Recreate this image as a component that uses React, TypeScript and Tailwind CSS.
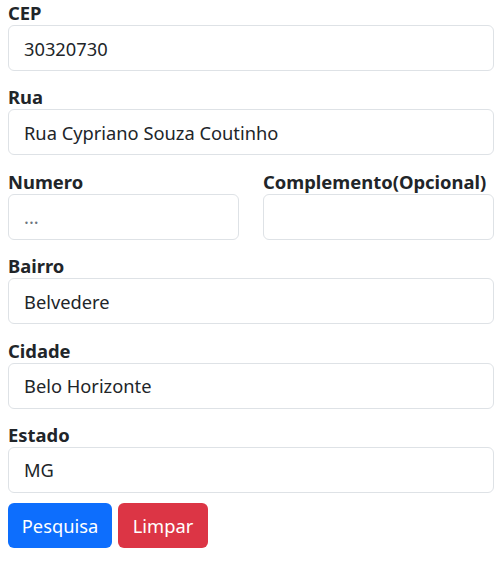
import React from "react";

function Field({ label, value, placeholder }: { label: string; value?: string; placeholder?: string }) {
  return (
    <div className="flex flex-col">
      <label className="h-[25px] leading-[25px] font-bold text-[18.4px] text-[#212529] whitespace-nowrap">{label}</label>
      <input
        readOnly
        value={value ?? ""}
        placeholder={placeholder}
        className="h-[46px] w-full rounded-[6px] border border-[#dee2e6] bg-white px-[15px] text-[18.3px] text-[#212529] placeholder:text-[#6c757d] outline-none"
      />
    </div>
  );
}

export default function App() {
  return (
    <div className="bg-white w-[500px] h-[561px] pl-[8px] pr-[6px] font-['Noto_Sans',sans-serif]">
      <div className="flex flex-col gap-[13.4px]">
        <Field label="CEP" value="30320730" />
        <Field label="Rua" value="Rua Cypriano Souza Coutinho" />
        <div className="grid grid-cols-2 gap-[24px]">
          <Field label="Numero" placeholder="..." />
          <Field label="Complemento(Opcional)" />
        </div>
        <Field label="Bairro" value="Belvedere" />
        <Field label="Cidade" value="Belo Horizonte" />
        <Field label="Estado" value="MG" />
      </div>
      <div className="flex gap-[6px] mt-[10px]">
        <button className="h-[45px] w-[104px] rounded-[6px] bg-[#0d6efd] text-white text-[18.3px]">Pesquisa</button>
        <button className="h-[45px] w-[90px] rounded-[6px] bg-[#dc3545] text-white text-[18.3px]">Limpar</button>
      </div>
    </div>
  );
}
